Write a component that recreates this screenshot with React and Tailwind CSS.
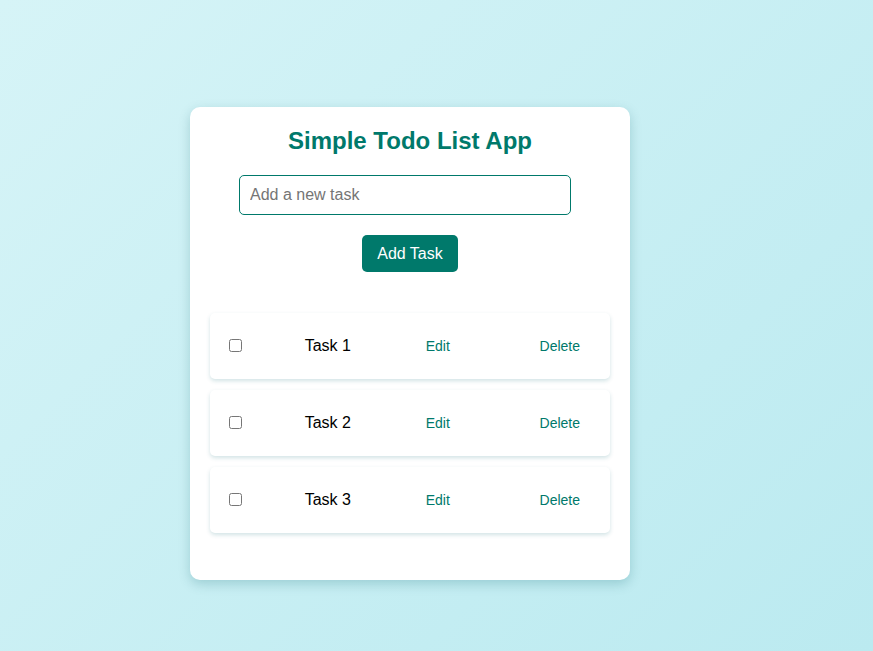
import React, { useState } from "react";

export default function App() {
  const [tasks, setTasks] = useState([
    { id: 1, text: "Task 1", done: false },
    { id: 2, text: "Task 2", done: false },
    { id: 3, text: "Task 3", done: false },
  ]);
  const [value, setValue] = useState("");

  const addTask = () => {
    if (!value.trim()) return;
    setTasks(t => [...t, { id: Date.now(), text: value, done: false }]);
    setValue("");
  };

  const toggle = id =>
    setTasks(t => t.map(x => (x.id === id ? { ...x, done: !x.done } : x)));

  const remove = id => setTasks(t => t.filter(x => x.id !== id));

  return (
    <div
      className="min-h-screen bg-[linear-gradient(135deg,#d6f4f7,#bbeaf0)] pt-[107px] pl-[190px]"
      style={{ fontFamily: '"Liberation Sans", Arial, sans-serif' }}
    >
      {/* Card */}
      <div className="w-[440px] bg-white rounded-[10px] p-5 pb-4 shadow-[0_4px_12px_rgba(0,90,100,0.22)]">
        <h2 className="text-[24px] font-bold text-[#00796b] text-center leading-[28px]">
          Simple Todo List App
        </h2>

        <div className="mt-5 flex flex-col items-center">
          <input
            className="w-[332px] h-10 mr-[10px] px-[10px] border border-[#00796b] rounded-[5px] text-[16px] outline-none placeholder:text-[#757575]"
            placeholder="Add a new task"
            value={value}
            onChange={e => setValue(e.target.value)}
          />
          <button
            onClick={addTask}
            className="mt-5 h-[37px] px-[15px] bg-[#00796b] text-white text-[16px] rounded-[5px]"
          >
            Add Task
          </button>
        </div>

        {/* List */}
        <ul className="mt-[41px] flex flex-col gap-[11px]">
          {tasks.map(t => (
            <li
              key={t.id}
              className="h-[66px] px-[15px] flex items-center justify-between bg-white rounded-[5px] shadow-[0_2px_4px_rgba(0,100,110,0.18)]"
            >
              <input
                type="checkbox"
                checked={t.done}
                onChange={() => toggle(t.id)}
                className="w-[13px] h-[13px] ml-1 mr-[3px] -mt-px"
              />
              <span className={`text-[16px] text-black ${t.done ? "line-through" : ""}`}>
                {t.text}
              </span>
              <button className="px-[15px] py-[10px] text-[14px] text-[#00796b]">Edit</button>
              <button
                onClick={() => remove(t.id)}
                className="px-[15px] py-[10px] text-[14px] text-[#00796b]"
              >
                Delete
              </button>
            </li>
          ))}
        </ul>
        <div className="h-[31px]" />
      </div>
    </div>
  );
}
